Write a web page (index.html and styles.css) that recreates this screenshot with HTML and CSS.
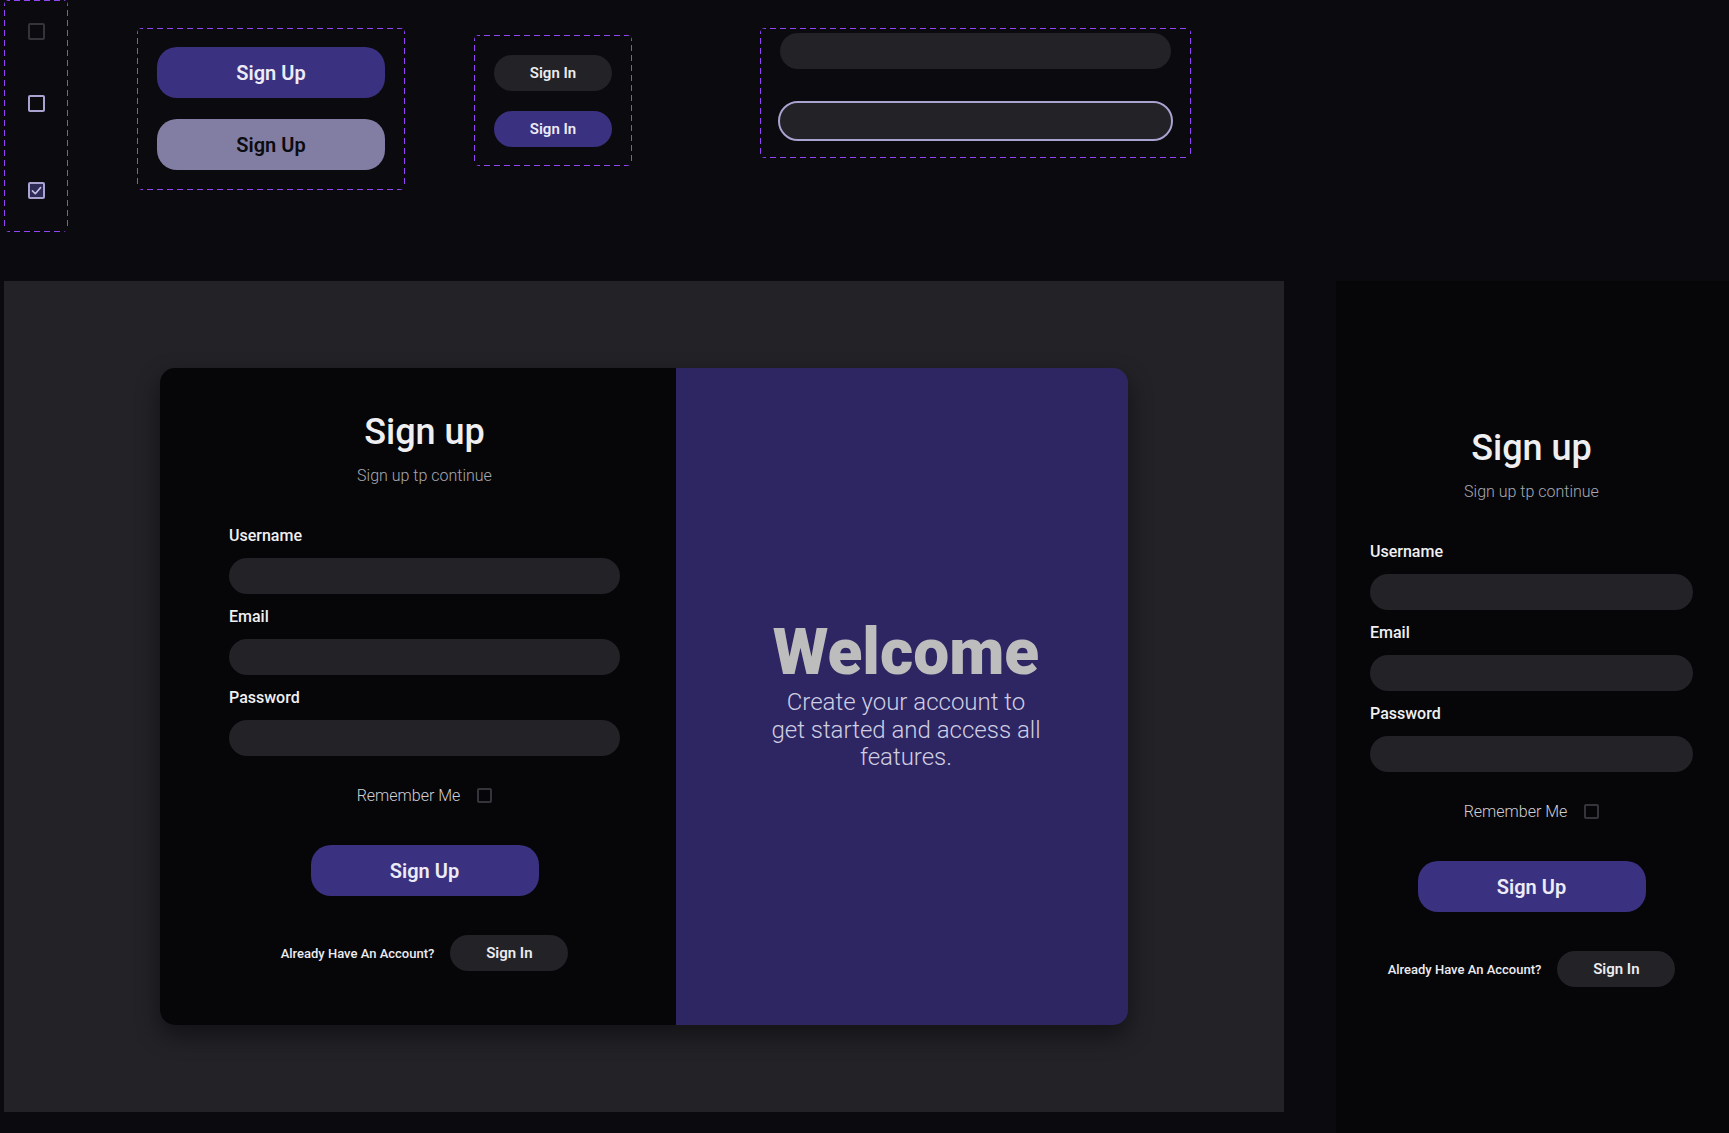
FILE: index.html
```html
<!DOCTYPE html>
<html lang="en">
<head>
<meta charset="utf-8">
<title>Sign up – components and screens</title>
<link rel="stylesheet" href="styles.css">
</head>
<body>
<div class="sheet">
  <div class="components">
    <div class="group group-checks">
      <span class="check"></span>
      <span class="check check-hover"></span>
      <span class="check check-on">
        <svg width="13" height="13" viewBox="0 0 16 16"><path d="M3 8.5 L6.5 12 L13 4.5" fill="none" stroke="#c3bfe4" stroke-width="2" stroke-linecap="round" stroke-linejoin="round"/></svg>
      </span>
    </div>
    <div class="group group-primary">
      <button class="btn btn-lg btn-primary">Sign Up</button>
      <button class="btn btn-lg btn-muted">Sign Up</button>
    </div>
    <div class="group group-small">
      <button class="btn btn-sm btn-dark">Sign In</button>
      <button class="btn btn-sm btn-primary">Sign In</button>
    </div>
    <div class="group group-inputs">
      <input class="text-input text-input-wide" type="text">
      <input class="text-input text-input-wide is-focus" type="text">
    </div>
  </div>

  <div class="screens">
    <div class="desktop">
      <div class="card">
        <div class="form-side">
          <form class="form">
            <h1 class="form-title">Sign up</h1>
            <p class="form-sub">Sign up tp continue</p>
            <div class="fields">
              <label class="field"><span class="field-label">Username</span><input class="text-input" type="text"></label>
              <label class="field"><span class="field-label">Email</span><input class="text-input" type="email"></label>
              <label class="field"><span class="field-label">Password</span><input class="text-input" type="password"></label>
            </div>
            <div class="remember"><span>Remember Me</span><span class="check check-sm"></span></div>
            <button class="btn btn-lg btn-primary form-submit" type="button">Sign Up</button>
            <div class="account"><span class="account-text">Already Have An Account?</span><button class="btn btn-sm btn-dark" type="button">Sign In</button></div>
          </form>
        </div>
        <div class="welcome-side">
          <h2 class="welcome-title">Welcome</h2>
          <p class="welcome-text">Create your account to<br>get started and access all<br>features.</p>
        </div>
      </div>
    </div>

    <div class="mobile">
      <form class="form">
        <h1 class="form-title">Sign up</h1>
        <p class="form-sub">Sign up tp continue</p>
        <div class="fields">
          <label class="field"><span class="field-label">Username</span><input class="text-input" type="text"></label>
          <label class="field"><span class="field-label">Email</span><input class="text-input" type="email"></label>
          <label class="field"><span class="field-label">Password</span><input class="text-input" type="password"></label>
        </div>
        <div class="remember"><span>Remember Me</span><span class="check check-sm"></span></div>
        <button class="btn btn-lg btn-primary form-submit" type="button">Sign Up</button>
        <div class="account"><span class="account-text">Already Have An Account?</span><button class="btn btn-sm btn-dark" type="button">Sign In</button></div>
      </form>
    </div>
  </div>
</div>
</body>
</html>
```

FILE: styles.css
```css
* { box-sizing: border-box; }

html, body {
  margin: 0;
  padding: 0;
  background: #0a0a0f;
  overflow: hidden;
  font-family: Roboto, "Liberation Sans", sans-serif;
}

/* ---------- component sheet ---------- */
.components {
  display: flex;
  align-items: flex-start;
  height: 281px;
}

.group {
  flex-shrink: 0;
  display: flex;
  flex-direction: column;
  align-items: center;
  border-radius: 5px;
  background:
    repeating-linear-gradient(90deg, #9244f6 0 6px, transparent 6px 10px) left top / 100% 1px no-repeat,
    repeating-linear-gradient(90deg, #9244f6 0 6px, transparent 6px 10px) left bottom / 100% 1px no-repeat,
    repeating-linear-gradient(180deg, #9244f6 0 6px, transparent 6px 10px) left top / 1px 100% no-repeat,
    repeating-linear-gradient(180deg, #9244f6 0 6px, transparent 6px 10px) right top / 1px 100% no-repeat;
}

.group-checks {
  margin-left: 4px;
  width: 64px;
  height: 232px;
  padding-top: 23px;
}

.group-primary {
  margin-left: 69px;
  margin-top: 28px;
  width: 268px;
  height: 162px;
  padding-top: 19px;
  gap: 21px;
}

.group-small {
  margin-left: 69px;
  margin-top: 35px;
  width: 158px;
  height: 131px;
  padding-top: 20px;
  gap: 20px;
}

.group-inputs {
  margin-left: 128px;
  margin-top: 28px;
  width: 431px;
  height: 130px;
  padding-top: 5px;
  gap: 34px;
}

/* checkbox */
.check {
  display: flex;
  align-items: center;
  justify-content: center;
  width: 17px;
  height: 17px;
  border: 2px solid #34343a;
  border-radius: 2px;
  flex-shrink: 0;
}
.check-hover { border-color: #a9a3cf; margin-top: 55px; }
.check-on { border-color: #a9a3cf; background: #2f2b57; margin-top: 70px; }
.check-sm { width: 15px; height: 15px; }

/* buttons */
.btn {
  display: flex;
  align-items: center;
  justify-content: center;
  border: 0;
  padding: 0;
  font-family: Roboto, "Liberation Sans", sans-serif;
  font-weight: 600;
  cursor: pointer;
}
.btn-lg {
  width: 228px;
  height: 51px;
  border-radius: 20px;
  font-size: 20px;
}
.btn-sm {
  width: 118px;
  height: 36px;
  border-radius: 18px;
  font-size: 15px;
}
.btn-primary { background: #3a3180; color: #ecebf7; }
.btn-muted { background: #827ea3; color: #0b0b10; }
.btn-dark { background: #222227; color: #ececf0; }

/* inputs */
.text-input {
  display: block;
  width: 100%;
  height: 36px;
  border: 0;
  border-radius: 18px;
  background: #222227;
  padding: 0 16px;
  color: #ececf0;
  font: 400 15px Roboto, "Liberation Sans", sans-serif;
}
.text-input-wide { width: 391px; flex-shrink: 0; }
.text-input.is-focus { outline: 2px solid #a9a3cf; outline-offset: 0; }

/* ---------- screens ---------- */
.screens {
  display: flex;
  align-items: flex-start;
}

.desktop {
  flex-shrink: 0;
  margin-left: 4px;
  width: 1280px;
  height: 831px;
  background: #222227;
  display: flex;
  align-items: center;
  justify-content: center;
}

.card {
  width: 968px;
  height: 657px;
  border-radius: 15px;
  overflow: hidden;
  display: grid;
  grid-template-columns: 516px 452px;
  box-shadow: 0 10px 24px rgba(0, 0, 0, 0.45);
}

.form-side {
  background: #060609;
  padding: 43px 56px 0 69px;
}

.welcome-side {
  background: #2d2663;
  display: flex;
  flex-direction: column;
  align-items: center;
  justify-content: center;
  text-align: center;
  padding-left: 8px;
}

.welcome-title {
  margin: 0;
  font-size: 64px;
  line-height: 64px;
  font-weight: 900;
  color: #bdbdbd;
}

.welcome-text {
  margin: 4px 0 0;
  font-size: 24px;
  line-height: 27.5px;
  font-weight: 300;
  color: #d0cee2;
  white-space: nowrap;
}

.mobile {
  flex-shrink: 0;
  margin-left: 52px;
  width: 393px;
  height: 852px;
  background: #060609;
  padding: 146px 36px 0 34px;
}

/* ---------- form ---------- */
.form {
  display: flex;
  flex-direction: column;
  margin: 0;
}

.form-title {
  margin: 0;
  font-size: 36px;
  line-height: 42px;
  font-weight: 500;
  color: #efeff2;
  text-align: center;
}

.form-sub {
  margin: 13px 0 0;
  font-size: 16px;
  line-height: 20px;
  font-weight: 300;
  color: #a8a8b0;
  text-align: center;
}

.fields {
  margin-top: 40px;
  display: flex;
  flex-direction: column;
  gap: 13px;
}

.field {
  display: flex;
  flex-direction: column;
  gap: 13px;
}

.field-label {
  font-size: 16px;
  line-height: 19px;
  font-weight: 500;
  color: #f0f0f2;
}

.remember {
  margin-top: 30px;
  display: flex;
  justify-content: center;
  align-items: center;
  gap: 17px;
  font-size: 16px;
  line-height: 19px;
  font-weight: 300;
  color: #cfcfd4;
}

.form-submit {
  margin-top: 40px;
  align-self: center;
}

.account {
  margin-top: 39px;
  display: flex;
  justify-content: center;
  align-items: center;
  gap: 16px;
}

.account-text {
  font-size: 13px;
  font-weight: 500;
  color: #ececf0;
}
```
